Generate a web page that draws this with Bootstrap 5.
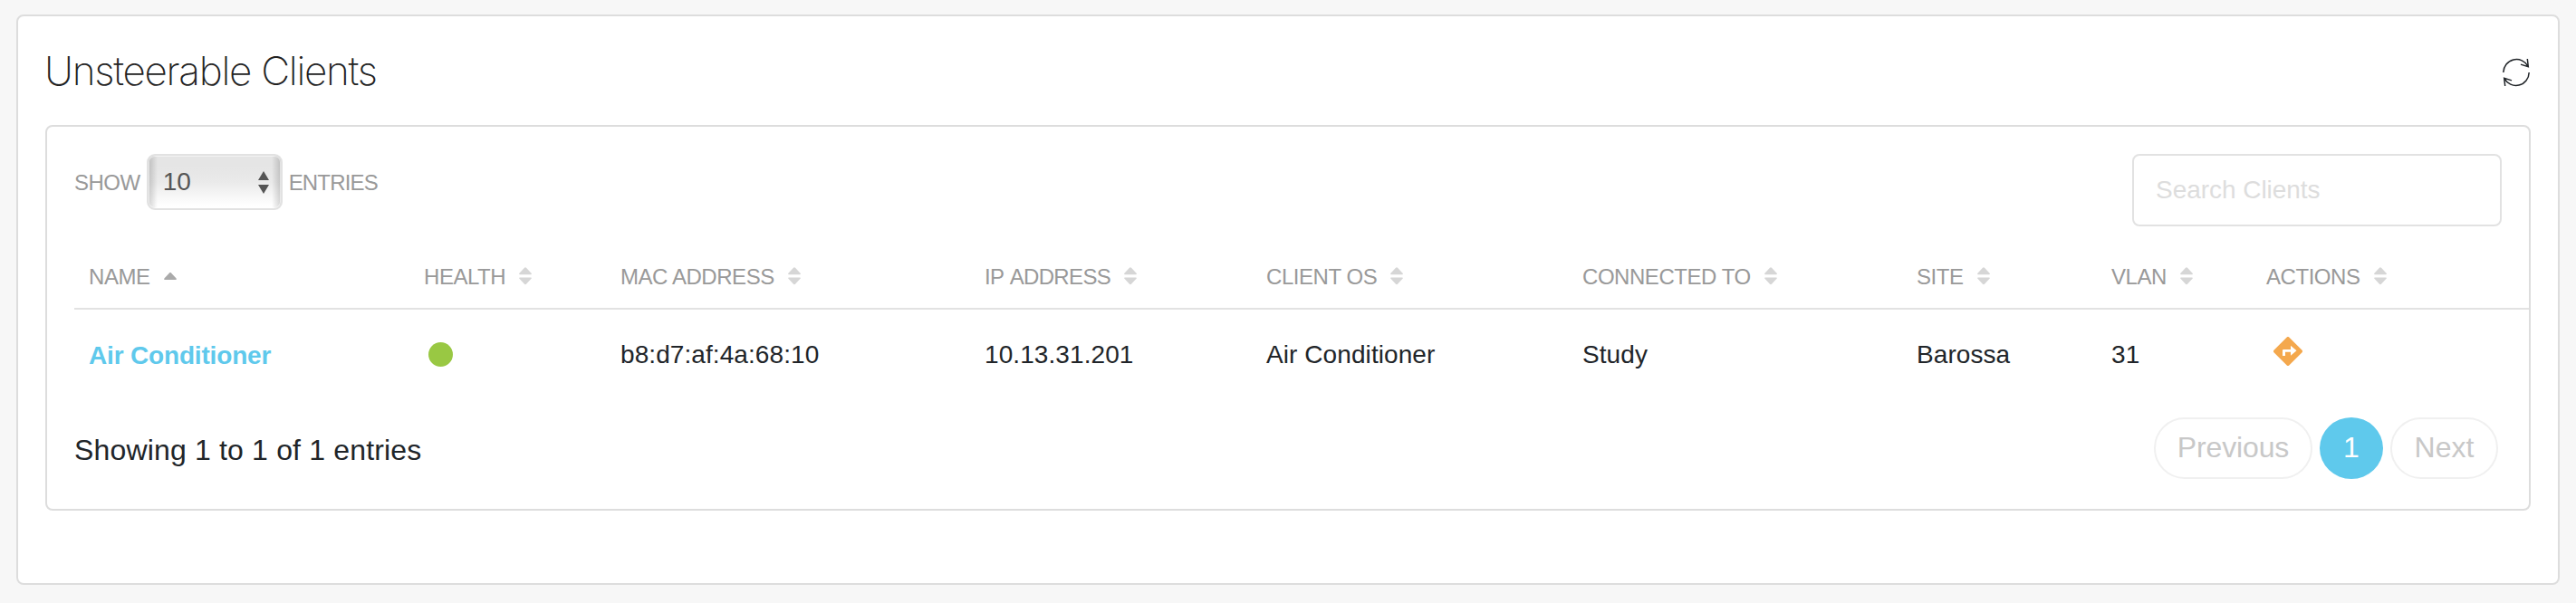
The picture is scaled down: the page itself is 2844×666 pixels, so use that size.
<!DOCTYPE html>
<html lang="en">
<head>
<meta charset="utf-8">
<title>Unsteerable Clients</title>
<link href="https://cdn.jsdelivr.net/npm/bootstrap@5.3.0/dist/css/bootstrap.min.css" rel="stylesheet">
<style>
  body { background: #f7f7f7; font-family: "Liberation Sans", Arial, sans-serif; font-size: 28px; line-height: 42px; color: #212529; padding: 16px 18px 20px; }
  .panel-outer, .panel-inner { border: 2px solid #ddd; border-radius: 8px; background: #fff; }
  .panel-outer { height: 630px; padding: 0 30px; }
  .panel-head { height: 120px; }
  .panel-title { font: 200 44px/53px Inter, "Liberation Sans", sans-serif; letter-spacing: -1.28px; color: #222; margin: 0 0 0 -1px; }
  .refresh { margin: 4px 1px 0 0; }
  .panel-inner { height: 426px; padding-top: 30px; }
  .inset { padding: 0 30px; }
  .length-box { height: 62px; font-size: 24px; color: #999; padding-top: 1px; letter-spacing: -.5px; }
  .length-select { width: 150px; height: 62px; margin: -1px 7px 0 7px; padding: 0 13px 0 16px; border: 2px solid #e2e2e2; border-radius: 9px; font-size: 28px; color: #555; letter-spacing: 0;
    background: linear-gradient(90deg, rgba(0,0,0,.17), rgba(0,0,0,0) 10px, rgba(0,0,0,0) calc(100% - 10px), rgba(0,0,0,.17)), linear-gradient(#e5e5e5 20%, #eaeaea 50%, #fff 95%);
    box-shadow: inset 0 0 0 1px rgba(255,255,255,.55); }
  .entries-text { letter-spacing: -.83px; }
  .search-input { width: 408px; height: 80px; border: 2px solid #e2e2e2; border-radius: 8px; padding: 0 24px; font-size: 28px; letter-spacing: -.04px; }
  .search-input::placeholder { color: #ddd; opacity: 1; }
  .clients { width: 2710px; margin: 16px 0 0 30px; table-layout: fixed; --bs-table-bg: transparent; }
  .clients th { padding: 22px 0 16px 16px; border-bottom: 2px solid #e2e2e2; font-size: 24px; line-height: 36px; font-weight: 400; color: #999; letter-spacing: -.45px; white-space: nowrap; }
  .clients .th-ip { letter-spacing: -.65px; word-spacing: 2px; }
  .clients td { height: 100px; padding: 29px 0 29px 16px; border: 0; line-height: 42px; color: #212529; vertical-align: top; letter-spacing: .08px; }
  .clients svg { display: inline-block; }
  .sorter { width: 14px; height: 20px; margin-left: 15px; vertical-align: -1px; fill: #d6d6d6; }
  .sorter.sorted { fill: #aaa; }
  .client-link { display: block; color: #5fc9ec; font-weight: 700; text-decoration: none; letter-spacing: -.17px; margin-top: 1px; }
  .health-dot { display: block; width: 27px; height: 27px; margin: 7px 0 0 5px; border-radius: 50%; background: #99c843; }
  .clients .steer { display: block; margin: 1px 0 0 8px; }
  .foot { margin-top: 18px; padding: 0 34px 0 30px; font-size: 32px; line-height: 48px; }
  .foot-info { letter-spacing: .17px; padding-top: 4px; }
  .pagination { --bs-pagination-font-size: 32px; gap: 8px; }
  .pagination .page-item .page-link { display: flex; align-items: center; justify-content: center; height: 68px; border: 2px solid #f0f0f0; border-radius: 34px; padding: 0 0 2px; margin: 0; color: #c8c8c8; line-height: 48px; background: #fff; }
  .pagination .page-item:first-child .page-link { width: 175px; letter-spacing: -.14px; }
  .pagination .page-item:last-child .page-link { width: 119px; }
  .pagination .page-item.active .page-link { width: 70px; border-color: #5fc9ec; background: #5fc9ec; color: #fff; border-radius: 50%; }
</style>
</head>
<body>
<svg class="d-none">
  <symbol id="both" viewBox="0 0 14 20"><path d="M7 .3c.4 0 .8.3 1 .5l5.600 6c.6.7.3 1.400-.6 1.400H1c-.9 0-1.200-.7-.6-1.400l5.600-6c.2-.2.600-.5 1-.5zM7 19.300c-.4 0-.8-.3-1-.5l-5.600-6c-.6-.7-.3-1.400.6-1.400h12c.9 0 1.200.7.6 1.400l-5.600 6c-.2.2-.6.5-1 .5z"/></symbol>
  <symbol id="up" viewBox="0 0 14 20"><path d="M7 6c.4 0 .8.2 1 .4l5.600 6c.6.700.3 1.600-.6 1.600H1c-.9 0-1.200-.9-.6-1.600l5.600-6c.2-.2.600-.4 1-.4z"/></symbol>
</svg>
<main class="panel-outer">
  <header class="panel-head d-flex align-items-center justify-content-between">
    <h1 class="panel-title">Unsteerable Clients</h1>
    <svg class="refresh" width="30" height="32" viewBox="0 0 30 32" fill="none" stroke="#212529" stroke-width="1.5"><path d="M.8 16A14.500 14.700 0 0 1 28.100 9.400M27.300 1l1 8.700L20 7.100M29.200 16A14.500 14.700 0 0 1 1.900 22.600M2.700 31l-1-8.700L10 24.900"/></svg>
  </header>
  <section class="panel-inner">
    <div class="inset d-flex justify-content-between">
      <div class="length-box d-flex align-items-center">
        <span>SHOW</span>
        <div class="length-select d-flex align-items-center justify-content-between" role="combobox">10
          <svg width="12" height="25" viewBox="0 0 12 25" fill="#555"><path d="M6 0l6 10H0zM6 25l6-10H0z"/></svg>
        </div>
        <span class="entries-text">ENTRIES</span>
      </div>
      <input class="search-input" type="text" placeholder="Search Clients">
    </div>
    <table class="table clients mb-0">
      <colgroup><col style="width:370px"><col style="width:217px"><col style="width:402px"><col style="width:311px"><col style="width:349px"><col style="width:369px"><col style="width:215px"><col style="width:171px"><col></colgroup>
      <thead><tr>
        <th>NAME<svg class="sorter sorted"><use href="#up"/></svg></th>
        <th>HEALTH<svg class="sorter"><use href="#both"/></svg></th>
        <th>MAC ADDRESS<svg class="sorter"><use href="#both"/></svg></th>
        <th class="th-ip">IP ADDRESS<svg class="sorter"><use href="#both"/></svg></th>
        <th>CLIENT OS<svg class="sorter"><use href="#both"/></svg></th>
        <th>CONNECTED TO<svg class="sorter"><use href="#both"/></svg></th>
        <th>SITE<svg class="sorter"><use href="#both"/></svg></th>
        <th>VLAN<svg class="sorter"><use href="#both"/></svg></th>
        <th>ACTIONS<svg class="sorter"><use href="#both"/></svg></th>
      </tr></thead>
      <tbody><tr>
        <td><a class="client-link" href="#">Air Conditioner</a></td>
        <td><span class="health-dot"></span></td>
        <td>b8:d7:af:4a:68:10</td>
        <td>10.13.31.201</td>
        <td>Air Conditioner</td>
        <td>Study</td>
        <td>Barossa</td>
        <td>31</td>
        <td><svg class="steer" width="32" height="32" viewBox="0 0 32 32"><path fill="#f4a84d" d="M14.500.7a2.100 2.100 0 0 1 3 0l13.800 13.800a2.100 2.100 0 0 1 0 3L17.500 31.300a2.100 2.100 0 0 1-3 0L.7 17.500a2.100 2.100 0 0 1 0-3z"/><path fill="#fff" d="M10 21v-6a1 1 0 0 1 1-1h8V9.700l6.500 5.500-6.500 5.500v-3.900h-6V21z"/></svg></td>
      </tr></tbody>
    </table>
    <div class="foot d-flex justify-content-between align-items-center">
      <div class="foot-info">Showing 1 to 1 of 1 entries</div>
      <ul class="pagination mb-0">
        <li class="page-item disabled"><a class="page-link">Previous</a></li>
        <li class="page-item active"><a class="page-link" href="#">1</a></li>
        <li class="page-item disabled"><a class="page-link">Next</a></li>
      </ul>
    </div>
  </section>
</main>
<script src="https://cdn.jsdelivr.net/npm/bootstrap@5.3.0/dist/js/bootstrap.bundle.min.js"></script>
</body>
</html>
